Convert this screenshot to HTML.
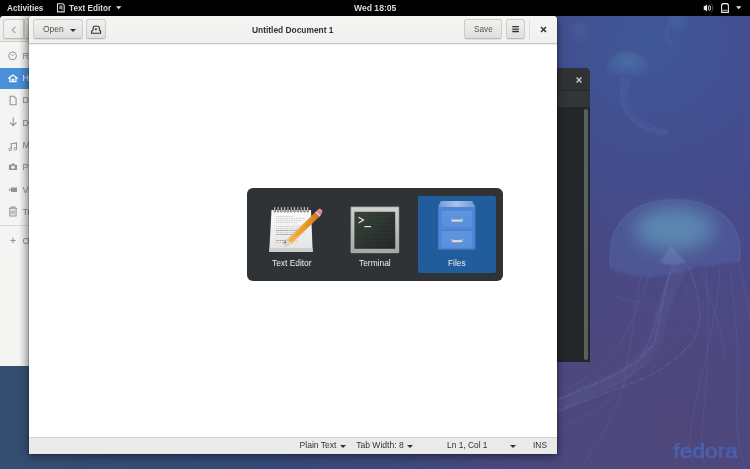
<!DOCTYPE html>
<html><head><meta charset="utf-8">
<style>
*{box-sizing:border-box;margin:0;padding:0}
html,body{width:750px;height:469px;overflow:hidden;font-family:"Liberation Sans",sans-serif}
body{position:relative;background:#3a4596}
#root{position:absolute;left:0;top:0;width:750px;height:469px;will-change:transform;overflow:hidden}
.abs{position:absolute}
#topbar{left:0;top:0;width:750px;height:16px;background:#000;color:#dadada;font-weight:bold;font-size:8.2px}
#topbar span{position:absolute;top:4px;line-height:10px;white-space:nowrap}
/* files window */
#files{left:0;top:16px;width:60px;height:350px;background:#f4f4f3;border-top-left-radius:4px;overflow:hidden}
#files .hdr{position:absolute;left:0;top:0;width:60px;height:26px;background:linear-gradient(#f2f2f1,#ebebea);border-bottom:1px solid #cdcdca}
#files .row{position:absolute;left:0;width:60px;height:20.5px;color:#8b8d8d;font-size:9px;white-space:nowrap}
#files .row.sel{background:#4a90d9;color:#fff}
#files .row span{position:absolute;left:22.4px;top:4.6px;line-height:10px}
#files .row svg{position:absolute;left:8px;top:4px}
/* terminal window */
#term{left:540px;top:68px;width:50px;height:294px;background:#232729;border-top-right-radius:5px;overflow:hidden}
#term .h1{position:absolute;left:0;top:0;width:50px;height:22px;background:#2f3335}
#term .h2{position:absolute;left:0;top:22px;width:50px;height:17px;background:#323638;border-top:1px solid #25282a}
#term .sb{position:absolute;left:44px;top:41px;width:4px;height:251px;background:#5a5f60;border-radius:2px}
/* editor */
#ed{left:29px;top:16px;width:528px;height:438px;background:#fff;box-shadow:0 2px 10px rgba(0,0,0,.5),0 0 0 1px rgba(0,0,0,.12);border-top-left-radius:4px;border-top-right-radius:4px}
#ed .hdr{position:absolute;left:0;top:0;width:528px;height:28px;background:linear-gradient(#f5f5f4,#f0f0ef);border-bottom:1.5px solid #c6c6c3;box-shadow:0 0.5px 1px rgba(0,0,0,.08);border-top-left-radius:4px;border-top-right-radius:4px}
.btn{position:absolute;top:3.4px;height:19.4px;border:1px solid #cbcbc8;border-bottom-color:#b9b9b6;border-radius:3px;background:linear-gradient(#f1f1f0,#dfdfdd);box-shadow:0 1px 1px rgba(0,0,0,.07)}
.lbl{position:absolute;white-space:nowrap;font-size:8.4px;color:#2e3436;line-height:10px}
#status{position:absolute;left:0;top:421px;width:528px;height:17px;background:#eaeae9;border-top:1px solid #d3d3d0}
/* switcher */
#sw{left:247px;top:188px;width:256px;height:92.5px;background:#2f3336;border-radius:6px}
#sw .sel{position:absolute;left:171px;top:7.7px;width:77.7px;height:77.3px;background:#215d9c;border-radius:2px}
#sw .t{position:absolute;top:70px;font-size:8.4px;color:#eeeeec;white-space:nowrap;line-height:10px}
</style></head>
<body><div id="root">
<!-- wallpaper -->
<svg class="abs" style="left:0;top:0" width="750" height="469" viewBox="0 0 750 469">
 <defs>
  <linearGradient id="wbase" x1="0" y1="0" x2="750" y2="0" gradientUnits="userSpaceOnUse">
   <stop offset="0" stop-color="#344e70"/>
   <stop offset="0.4" stop-color="#37497a"/>
   <stop offset="0.67" stop-color="#45497e"/>
   <stop offset="1" stop-color="#474a8a"/>
  </linearGradient>
  <radialGradient id="wblue" cx="650" cy="40" r="260" gradientUnits="userSpaceOnUse">
   <stop offset="0" stop-color="#3f5898" stop-opacity="1"/>
   <stop offset="0.5" stop-color="#424e90" stop-opacity="0.75"/>
   <stop offset="1" stop-color="#434c90" stop-opacity="0"/>
  </radialGradient>
  <radialGradient id="wpurp" cx="680" cy="430" r="260" gradientUnits="userSpaceOnUse">
   <stop offset="0" stop-color="#4f4678" stop-opacity="0.9"/>
   <stop offset="0.5" stop-color="#50487e" stop-opacity="0.65"/>
   <stop offset="1" stop-color="#4d4884" stop-opacity="0"/>
  </radialGradient>
  <radialGradient id="bell" cx="0.52" cy="0.38" r="0.62">
   <stop offset="0" stop-color="#5b8cb8" stop-opacity="1"/>
   <stop offset="0.45" stop-color="#5680b2" stop-opacity="0.8"/>
   <stop offset="0.8" stop-color="#526fae" stop-opacity="0.45"/>
   <stop offset="1" stop-color="#5068ac" stop-opacity="0.25"/>
  </radialGradient>
  <radialGradient id="bell2" cx="0.5" cy="0.4" r="0.6">
   <stop offset="0" stop-color="#4f78a8" stop-opacity="0.7"/>
   <stop offset="1" stop-color="#4a6aa8" stop-opacity="0.25"/>
  </radialGradient>
  <filter id="bl1"><feGaussianBlur stdDeviation="1.2"/></filter>
  <filter id="bl2"><feGaussianBlur stdDeviation="2"/></filter>
  <filter id="bl8" x="-50%" y="-50%" width="200%" height="200%"><feGaussianBlur stdDeviation="9"/></filter>
  <filter id="bl0"><feGaussianBlur stdDeviation="0.5"/></filter>
 </defs>
 <rect width="750" height="469" fill="url(#wbase)"/>
 <rect width="750" height="469" fill="url(#wblue)"/>
 <rect width="750" height="469" fill="url(#wpurp)"/>
 <!-- big bell -->
 <path d="M611 268 C606 225 630 200 675 200 C718 200 745 225 739 262 C725 262 712 268 700 266 C680 272 660 280 640 276 C628 275 618 272 611 268Z" fill="#5570ae" fill-opacity=".35" filter="url(#bl1)"/>
 <ellipse cx="674" cy="229" rx="40" ry="21" fill="#66a8c4" opacity=".6" filter="url(#bl8)"/>
 <path d="M611 268 C606 225 630 200 675 200 C718 200 745 225 739 262" stroke="#6a88c0" stroke-opacity=".22" stroke-width="1.5" fill="none" filter="url(#bl0)"/>
 <path d="M660 262 L671 246 L686 262 Q672 268 660 262Z" fill="#8aa6d4" opacity=".25" filter="url(#bl1)"/>
 <!-- small bells -->
 <path d="M607 74 C606 58 615 51.5 627 51.5 C640 51.5 648 58 648 74 C640 76 632 76 627 76 C620 76 613 76 607 74Z" fill="url(#bell2)" filter="url(#bl1)"/>
 <path d="M666 30 C664 18 670 13 677 13 C685 13 691 18 689 30 C682 31 672 31 666 30Z" fill="url(#bell2)" filter="url(#bl1)" opacity="0.6"/>
 <path d="M667 28 C664 36 670 42 672 44" stroke="#7a90d0" stroke-opacity=".15" stroke-width="2" fill="none" filter="url(#bl1)"/>
 <ellipse cx="580" cy="32" rx="10" ry="12" fill="url(#bell2)" filter="url(#bl2)" opacity="0.45"/>
 <!-- tentacles -->
 <g fill="none" stroke="#8696da">
  <path d="M680 268 C668 290 660 320 655 342 C645 362 620 378 595 388 C580 395 568 402 556 406" stroke-width="14" stroke-opacity="0.07" filter="url(#bl1)"/>
  <path d="M672 267 C665 285 660 320 655 342 C640 365 610 378 580 390 C570 395 562 398 556 400" stroke-width="1.6" stroke-opacity="0.22" stroke-dasharray="2 1 1 1.5 3 1" filter="url(#bl0)"/>
  <path d="M689 267 C696 285 702 310 699 325 C695 345 680 355 660 370 C640 382 605 392 556 412" stroke-width="1.6" stroke-opacity="0.22" stroke-dasharray="3 1 1 2 2 1" filter="url(#bl0)"/>
  <path d="M676 270 C690 290 690 310 680 330 C670 350 640 372 600 392" stroke-width="1" stroke-opacity="0.16" stroke-dasharray="1.5 1.5" filter="url(#bl0)"/>
  <g stroke-width="0.6" stroke-opacity="0.2">
  <path d="M641 275 C636 300 632 340 624 380 C618 410 600 440 580 469"/>
  <path d="M650 272 C640 300 630 335 605 362 C590 378 570 388 556 392"/>
  <path d="M706 267 C708 300 710 350 703 420 C700 440 702 455 706 469"/>
  <path d="M720 267 C718 310 705 360 692 420 C688 440 690 455 694 469"/>
  <path d="M730 270 C735 310 740 350 737 400 C735 430 740 450 745 469"/>
  <path d="M740 265 C745 290 750 310 750 320"/>
  <path d="M668 275 C660 310 650 360 610 400 C590 415 570 425 556 430"/>
  <path d="M612 293 C618 300 630 300 640 302"/>
  <path d="M698 268 C712 300 722 330 725 360"/>
  </g>
 </g>
 <g fill="none" stroke="#8696da">
  <path d="M626 78 C620 92 624 108 634 120 C643 128 655 132 668 134" stroke-width="7" stroke-opacity="0.08" filter="url(#bl1)"/>
  <path d="M624 78 C618 92 622 108 632 120 C641 128 653 131 666 133" stroke-width="1.2" stroke-opacity="0.13" stroke-dasharray="2 1 1 1.5" filter="url(#bl0)"/>
  <path d="M630 78 C624 92 629 106 638 117 C647 125 658 128 668 131" stroke-width="1.2" stroke-opacity="0.12" stroke-dasharray="3 1 1 1" filter="url(#bl0)"/>
 </g>
 <text x="673.5" y="458" font-family="Liberation Sans" font-size="21" fill="#4a60ac" stroke="#4a60ac" stroke-width="0.7" textLength="64.5" lengthAdjust="spacingAndGlyphs">fedora</text>
</svg>

<!-- terminal behind -->
<div id="term" class="abs">
 <div class="h1"></div><div class="h2"></div><div class="sb"></div>
 <svg class="abs" style="left:36px;top:9px" width="6" height="6" viewBox="0 0 6 6"><path d="M0.6 0.6L5.4 5.4M5.4 0.6L0.6 5.4" stroke="#c8cac8" stroke-width="1.4"/></svg>
</div>

<!-- files window behind -->
<div class="abs" style="left:0;top:16px;width:6px;height:6px;background:#1c2230"></div>
<div id="files" class="abs">
 <div class="hdr"></div>
 <div class="btn" style="left:3px;top:3px;width:21px;height:19.5px;background:linear-gradient(#f3f3f2,#ebebea);border-top-right-radius:0;border-bottom-right-radius:0"></div>
 <svg class="abs" style="left:11px;top:9.5px" width="6" height="8" viewBox="0 0 6 8"><path d="M4.5 0.8L1.2 4L4.5 7.2" stroke="#a2a4a4" stroke-width="1.1" fill="none"/></svg>
 <div class="btn" style="left:23.5px;top:3px;width:30px;height:19.5px;border-top-left-radius:0;border-bottom-left-radius:0"></div>
 <div class="row" style="top:30px"><svg width="10" height="10" viewBox="0 0 10 10"><circle cx="4.6" cy="5.9" r="3.9" stroke="#929494" stroke-width="1" fill="none"/><path d="M3 4.3L4.6 5.9L6.2 4.3" stroke="#929494" stroke-width="0.9" fill="none"/></svg><span>Recent</span></div>
 <div class="row sel" style="top:52px"><svg width="11" height="11" viewBox="0 0 11 11"><path d="M0.7 6.2L4.85 2.9L9.2 6.2" stroke="#fff" stroke-width="1.3" fill="none" stroke-linecap="round" stroke-linejoin="round"/><path d="M1.9 5.6V9.6H7.9V5.6" stroke="#fff" stroke-width="1.2" fill="none"/><path d="M4.2 9.6V7.4H5.6V9.6" stroke="#fff" stroke-width="1.1" fill="none"/></svg><span>Home</span></div>
 <div class="row" style="top:74.5px"><svg width="10" height="11" viewBox="0 0 10 11"><path d="M2.1 1.3H5.9L8.1 3.5V9.7H2.1Z" stroke="#929494" stroke-width="1.1" fill="none"/></svg><span>Documents</span></div>
 <div class="row" style="top:97px"><svg width="10" height="10" viewBox="0 0 10 10"><path d="M5.2 0.5V8.5M2 5.5L5.2 8.7L8.4 5.5" stroke="#929494" stroke-width="1.1" fill="none"/></svg><span>Downloads</span></div>
 <div class="row" style="top:119px"><svg width="10" height="10" viewBox="0 0 10 10" style="top:6.5px"><path d="M3.3 7.2V1.8L8.5 0.9V6.5" stroke="#929494" stroke-width="1.1" fill="none"/><circle cx="2.2" cy="7.4" r="1.3" stroke="#929494" stroke-width="1" fill="none"/><circle cx="7.4" cy="6.8" r="1.3" stroke="#929494" stroke-width="1" fill="none"/></svg><span>Music</span></div>
 <div class="row" style="top:141.5px"><svg width="10" height="10" viewBox="0 0 10 10"><path d="M0.9 2.7H3L3.8 1.4H6.2L7 2.7H9.1V8H0.9Z" fill="#929494"/><circle cx="5" cy="5.3" r="1.7" fill="#f2f2f1"/></svg><span>Pictures</span></div>
 <div class="row" style="top:164px"><svg width="10" height="10" viewBox="0 0 10 10"><path d="M3 3.5H9V8H3Z" fill="#929494"/><path d="M1 4.2L3 5.75L1 7.3Z" fill="#929494"/></svg><span>Videos</span></div>
 <div class="row" style="top:186px"><svg width="10" height="11" viewBox="0 0 10 11"><path d="M0.9 2.3H9.1M3.2 2.2V1H6.8V2.2M1.9 2.6V10H8.1V2.6M4 4.3V8.2M6 4.3V8.2" stroke="#929494" stroke-width="1.1" fill="none"/></svg><span>Trash</span></div>
 <div class="abs" style="left:0;top:208.5px;width:60px;height:1px;background:#dadad8"></div>
 <div class="row" style="top:215px"><svg width="10" height="10" viewBox="0 0 10 10" style="top:5px"><path d="M5 1.8V7.2M2.3 4.5H7.7" stroke="#929494" stroke-width="1.1" fill="none"/></svg><span>Other Locations</span></div>
 <!-- shadow from editor -->
 <div class="abs" style="left:19px;top:0;width:10px;height:350px;background:linear-gradient(90deg,rgba(0,0,0,0),rgba(0,0,0,.13))"></div>
</div>

<!-- editor window -->
<div id="ed" class="abs">
 <div class="hdr"></div>
 <div class="btn" style="left:4.2px;width:49.5px"></div>
 <div class="lbl" style="left:13.8px;top:7.6px;color:#555753;font-size:8.9px;transform:scaleX(0.95);transform-origin:0 0">Open</div>
 <svg class="abs" style="left:41px;top:13px" width="6" height="3" viewBox="0 0 6 3"><path d="M0 0H6L3 3Z" fill="#2e3436"/></svg>
 <div class="btn" style="left:57.3px;width:19.3px"></div>
 <svg class="abs" style="left:60px;top:7px" width="14" height="13" viewBox="0 0 14 13"><path d="M4.2 6.7V4.5Q4.2 3.3 5.4 3.3H9.1Q10.3 3.3 10.3 4.5V6.7L11.6 8.4V10.3H2.6V8.4Z" stroke="#2e3436" stroke-width="1.1" fill="none" stroke-linejoin="round"/><path d="M6.9 5.2V7.2M5.9 6.2H7.9" stroke="#2e3436" stroke-width="1.1"/></svg>
 <div class="lbl" style="left:223px;top:8.5px;font-weight:bold;color:#2e3436">Untitled Document 1</div>
 <div class="btn" style="left:435.3px;width:37.5px"></div>
 <div class="lbl" style="left:444.6px;top:7.6px;color:#555753;font-size:8.9px;transform:scaleX(0.93);transform-origin:0 0">Save</div>
 <div class="btn" style="left:476.7px;width:19.8px"></div>
 <svg class="abs" style="left:483px;top:9px" width="8" height="8" viewBox="0 0 8 8"><path d="M0.3 1.7H6.9M0.3 4.1H6.9M0.3 6.5H6.9" stroke="#2e3436" stroke-width="1.3"/></svg>
 <div class="abs" style="left:500px;top:4px;width:1px;height:19px;background:#dcdcd9"></div>
 <svg class="abs" style="left:511px;top:10px" width="7" height="7" viewBox="0 0 7 7"><path d="M1 1L6 6M6 1L1 6" stroke="#2e3436" stroke-width="1.5"/></svg>
 <div id="status">
  <div class="lbl" style="left:270.6px;top:2px;font-size:8.55px">Plain Text</div>
  <svg class="abs" style="left:311.4px;top:6.5px" width="6" height="3" viewBox="0 0 6 3"><path d="M0 0H6L3 3Z" fill="#2e3436"/></svg>
  <div class="lbl" style="left:327.2px;top:2px;font-size:8.55px">Tab Width: 8</div>
  <svg class="abs" style="left:377.8px;top:6.5px" width="6" height="3" viewBox="0 0 6 3"><path d="M0 0H6L3 3Z" fill="#2e3436"/></svg>
  <div class="lbl" style="left:418px;top:2px">Ln 1, Col 1</div>
  <svg class="abs" style="left:481px;top:6.5px" width="6" height="3" viewBox="0 0 6 3"><path d="M0 0H6L3 3Z" fill="#2e3436"/></svg>
  <div class="lbl" style="left:504px;top:2px">INS</div>
 </div>
</div>

<!-- switcher -->
<div id="sw" class="abs">
 <div class="sel"></div>
<svg class="abs" style="left:0;top:0" width="256" height="93" viewBox="0 0 256 93">
 <defs>
  <linearGradient id="pad" x1="0" y1="0" x2="0" y2="1"><stop offset="0" stop-color="#fbfbfb"/><stop offset="1" stop-color="#e2e2e2"/></linearGradient>
  <linearGradient id="pen" x1="0" y1="0" x2="1" y2="0"><stop offset="0" stop-color="#f7c26a"/><stop offset="0.5" stop-color="#f0a030"/><stop offset="1" stop-color="#c87412"/></linearGradient>
  <linearGradient id="tframe" x1="0" y1="0" x2="0" y2="1"><stop offset="0" stop-color="#d2d2d0"/><stop offset="1" stop-color="#a6a6a4"/></linearGradient>
  <linearGradient id="tscr" x1="0" y1="0" x2="1" y2="1"><stop offset="0" stop-color="#344038"/><stop offset="1" stop-color="#1f2422"/></linearGradient>
  <linearGradient id="ctop" x1="0" y1="0" x2="1" y2="0"><stop offset="0" stop-color="#6d9ad8"/><stop offset="0.5" stop-color="#a9c4ea"/><stop offset="1" stop-color="#6d9ad8"/></linearGradient>
  <linearGradient id="cdr" x1="0" y1="0" x2="0" y2="1"><stop offset="0" stop-color="#5f95de"/><stop offset="1" stop-color="#5a8fda"/></linearGradient>
 <pattern id="scan" width="4" height="2" patternUnits="userSpaceOnUse"><rect width="4" height="1" fill="rgba(255,255,255,.035)"/></pattern>
 </defs>
 <!-- text editor notepad -->
 <path d="M24.5 22H64L65.7 64H22.2Z" fill="url(#pad)"/>
 <path d="M22.8 60H65.5L65.7 64H22.2Z" fill="#cfcfcf"/>
 <g><rect x="27.0" y="18.8" width="1.5" height="5.4" rx="0.7" fill="#f4f4f4" stroke="#2a2a2a" stroke-width="0.6"/><rect x="30.3" y="18.8" width="1.5" height="5.4" rx="0.7" fill="#f4f4f4" stroke="#2a2a2a" stroke-width="0.6"/><rect x="33.6" y="18.8" width="1.5" height="5.4" rx="0.7" fill="#f4f4f4" stroke="#2a2a2a" stroke-width="0.6"/><rect x="36.9" y="18.8" width="1.5" height="5.4" rx="0.7" fill="#f4f4f4" stroke="#2a2a2a" stroke-width="0.6"/><rect x="40.2" y="18.8" width="1.5" height="5.4" rx="0.7" fill="#f4f4f4" stroke="#2a2a2a" stroke-width="0.6"/><rect x="43.5" y="18.8" width="1.5" height="5.4" rx="0.7" fill="#f4f4f4" stroke="#2a2a2a" stroke-width="0.6"/><rect x="46.8" y="18.8" width="1.5" height="5.4" rx="0.7" fill="#f4f4f4" stroke="#2a2a2a" stroke-width="0.6"/><rect x="50.1" y="18.8" width="1.5" height="5.4" rx="0.7" fill="#f4f4f4" stroke="#2a2a2a" stroke-width="0.6"/><rect x="53.4" y="18.8" width="1.5" height="5.4" rx="0.7" fill="#f4f4f4" stroke="#2a2a2a" stroke-width="0.6"/><rect x="56.7" y="18.8" width="1.5" height="5.4" rx="0.7" fill="#f4f4f4" stroke="#2a2a2a" stroke-width="0.6"/><rect x="60.0" y="18.8" width="1.5" height="5.4" rx="0.7" fill="#f4f4f4" stroke="#2a2a2a" stroke-width="0.6"/></g>
 <g stroke="#a8a8a8" stroke-width="0.5" stroke-dasharray="1.2 0.6">
  <path d="M29 28.5H46M29 30.5H58M29 32.5H55M29 34.5H50"/>
  <path d="M29 38.5H57M29 40.5H58M29 42.5H56M29 44.5H58M29 46.5H52"/>
  <path d="M29 52.5H50M29 54.5H40"/>
 </g>
 <g stroke="#707070" stroke-width="0.55" stroke-dasharray="1.2 0.6">
  <path d="M29 42.5H58M29 46.5H50M29 52.5H46"/>
 </g>
 <g transform="translate(-0.8,-1.8)">
 <path d="M36 57L68 28L72 32L40 61Z" fill="rgba(0,0,0,.10)"/>
 <path d="M41 53.2L69.6 25.6L73.8 29.9L45.2 57.5Z" fill="url(#pen)"/>
 <path d="M43.1 55.35L71.7 27.75" stroke="#d9861c" stroke-width="0.8"/>
 <path d="M41 53.2L45.2 57.5L37.8 56.7Z" fill="#ecd9b4"/>
 <path d="M37.8 56.7L39 55L40 56.4Z" fill="#333"/>
 <path d="M69 26.2L73.2 30.5L74.6 29.1L70.4 24.8Z" fill="#cfcfcf"/>
 <path d="M70.4 24.8L72.2 23Q73.6 21.6 75.2 23.2Q76.8 24.8 76.2 25.6L74.6 29.1Z" fill="#e98596"/>
 </g>
 <!-- terminal -->
 <rect x="103.8" y="18.8" width="48.3" height="46.3" fill="url(#tframe)"/>
 <rect x="104.3" y="19.3" width="47.3" height="45.3" fill="none" stroke="#e2e2e0" stroke-width="0.8" opacity=".6"/>
 <rect x="104" y="19" width="47.9" height="45.9" fill="none" stroke="#7e7e7c" stroke-width="0.5"/>
 <rect x="107.4" y="23.8" width="40.8" height="37" fill="url(#tscr)"/>
 <rect x="107.4" y="23.8" width="40.8" height="37" fill="url(#scan)"/>
 <path d="M111.5 29.2L116.6 32.1L111.5 35" stroke="#eee" stroke-width="1.1" fill="none"/>
 <path d="M117.3 38.6H124" stroke="#eee" stroke-width="1.1"/>
 <!-- files cabinet -->
 <path d="M193.8 12.9H225.1L228.3 18.9H191.2Z" fill="url(#ctop)"/>
 <rect x="191.2" y="18.9" width="37.1" height="42.8" fill="#4f86d6"/>
 <rect x="194.8" y="21.4" width="30.3" height="17.9" fill="url(#cdr)"/>
 <rect x="194.8" y="41.9" width="30.3" height="17.9" fill="url(#cdr)"/>
 <path d="M194.8 21.9H225.1M194.8 42.4H225.1" stroke="#4277c4" stroke-width="0.8"/>
 <path d="M191.2 61.2H228.3" stroke="#3d6fbf" stroke-width="1"/>
 <rect x="204.5" y="31.6" width="11.2" height="2.2" rx="1.1" fill="#e2e2df" stroke="#8c96a6" stroke-width="0.4"/>
 <rect x="204.5" y="52" width="11.2" height="2.2" rx="1.1" fill="#e2e2df" stroke="#8c96a6" stroke-width="0.4"/>
 <path d="M204.9 31.8V30.6M215.3 31.8V30.6M204.9 52.2V51M215.3 52.2V51" stroke="#d0d0cd" stroke-width="0.9"/>
</svg>
 <div class="t" style="left:25px">Text Editor</div>
 <div class="t" style="left:112px">Terminal</div>
 <div class="t" style="left:201px">Files</div>
</div>

<!-- top bar -->
<div id="topbar" class="abs">
 <span style="left:7px">Activities</span>
 <svg class="abs" style="left:56px;top:2px" width="10" height="12" viewBox="0 0 10 12"><path d="M1.5 1.8H6.8L8.2 3.2V9.9H1.5Z" stroke="#dadada" stroke-width="1.1" fill="none"/><path d="M3.3 3.6H6.6V8.2H5.4V7.3H3.3Z" fill="#8a8a8a"/></svg>
 <span style="left:69px">Text Editor</span>
 <svg class="abs" style="left:115.5px;top:6px" width="6" height="4" viewBox="0 0 6 4"><path d="M0 0.3H5.4L2.7 3.3Z" fill="#e4e4e4"/></svg>
 <span style="left:354px;top:3.4px;font-size:8.6px">Wed 18:05</span>
 <svg class="abs" style="left:703px;top:2px" width="11" height="12" viewBox="0 0 11 12"><path d="M0.8 4H2.2L4 2.2V9.8L2.2 8H0.8Z" fill="#e4e4e4"/><ellipse cx="6.4" cy="6" rx="1.1" ry="2.6" stroke="#e4e4e4" stroke-width="0.9" fill="none"/><path d="M8.7 1.6Q10.8 6 8.7 10.4" stroke="#e4e4e4" stroke-width="0.9" fill="none" opacity=".35"/></svg>
 <svg class="abs" style="left:721px;top:3px" width="8" height="10" viewBox="0 0 8 10"><path d="M0.6 9.4V1.8L1.7 0.6H6.3L7.4 1.8V9.4Z" stroke="#e4e4e4" stroke-width="1.1" fill="none"/><path d="M1.2 3.5Q1.2 1.2 4 1.2Q6.8 1.2 6.8 3.5V1.2H1.2Z" fill="#e4e4e4" opacity=".8"/><rect x="1.3" y="6.6" width="5.4" height="1.5" fill="#e4e4e4" opacity=".55"/></svg>
 <svg class="abs" style="left:735.5px;top:6px" width="6" height="4" viewBox="0 0 6 4"><path d="M0 0.3H5.4L2.7 3.3Z" fill="#e4e4e4"/></svg>
</div>
</div></body></html>
